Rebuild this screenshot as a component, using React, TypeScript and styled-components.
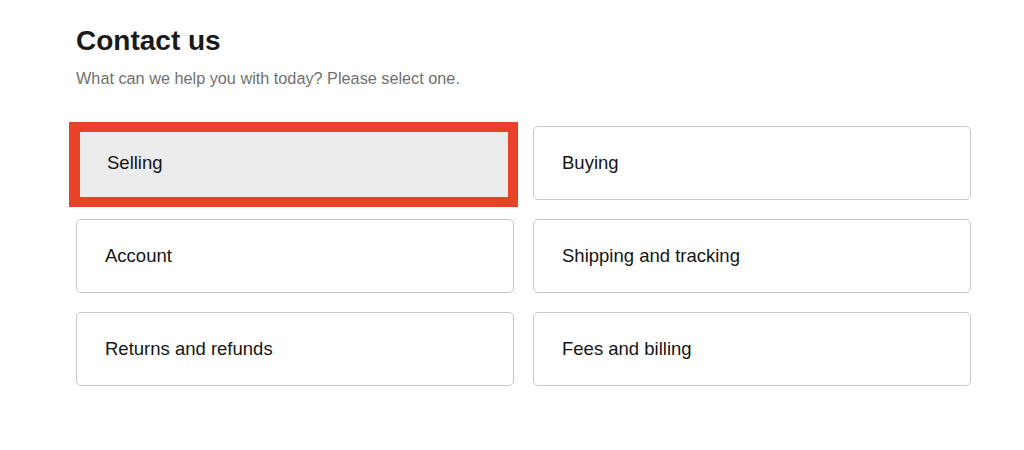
import styled, { createGlobalStyle } from "styled-components";

const GlobalStyle = createGlobalStyle`
  body {
    margin: 0;
    background: #ffffff;
    font-family: "Liberation Sans", Arial, Helvetica, sans-serif;
  }
`

const Page = styled.main`
  padding: 25px 0 0 76px;
  width: 895px;
`

const Title = styled.h1`
  margin: 0;
  font-size: 28px;
  line-height: 32px;
  font-weight: 700;
  color: #1a1a1a;
`

const Subtitle = styled.p`
  margin: 10.5px 0 0;
  font-size: 16.25px;
  line-height: 20px;
  color: #707070;
`

const Grid = styled.div`
  display: grid;
  grid-template-columns: 438px 438px;
  grid-auto-rows: 74px;
  gap: 19px;
  margin-top: 38.5px;
`

const Card = styled.button<{ $selected?: boolean }>`
  display: flex;
  align-items: center;
  box-sizing: border-box;
  padding: 0 0 0 28px;
  border: 1px solid #c6c6c6;
  border-radius: 5px;
  background: #ffffff;
  font-family: inherit;
  font-size: 18.5px;
  color: #151515;
  text-align: left;
  cursor: pointer;

  ${props => props.$selected && `
    margin: -4px -4px -7px -7px;
    padding: 0 0 4px 27px;
    border: 10px solid #ea4129;
    border-left-width: 11px;
    border-radius: 0;
    background: #ececec;
  `}
`

const topics = [
  "Selling",
  "Buying",
  "Account",
  "Shipping and tracking",
  "Returns and refunds",
  "Fees and billing",
]

export default function App(): JSX.Element {
  return (
    <>
      <GlobalStyle/>
      <Page>
        <Title>Contact us</Title>
        <Subtitle>What can we help you with today? Please select one.</Subtitle>
        <Grid>
          {topics.map(topic => (
            <Card key={topic} $selected={topic === "Selling"}>{topic}</Card>
          ))}
        </Grid>
      </Page>
    </>
  )
}
